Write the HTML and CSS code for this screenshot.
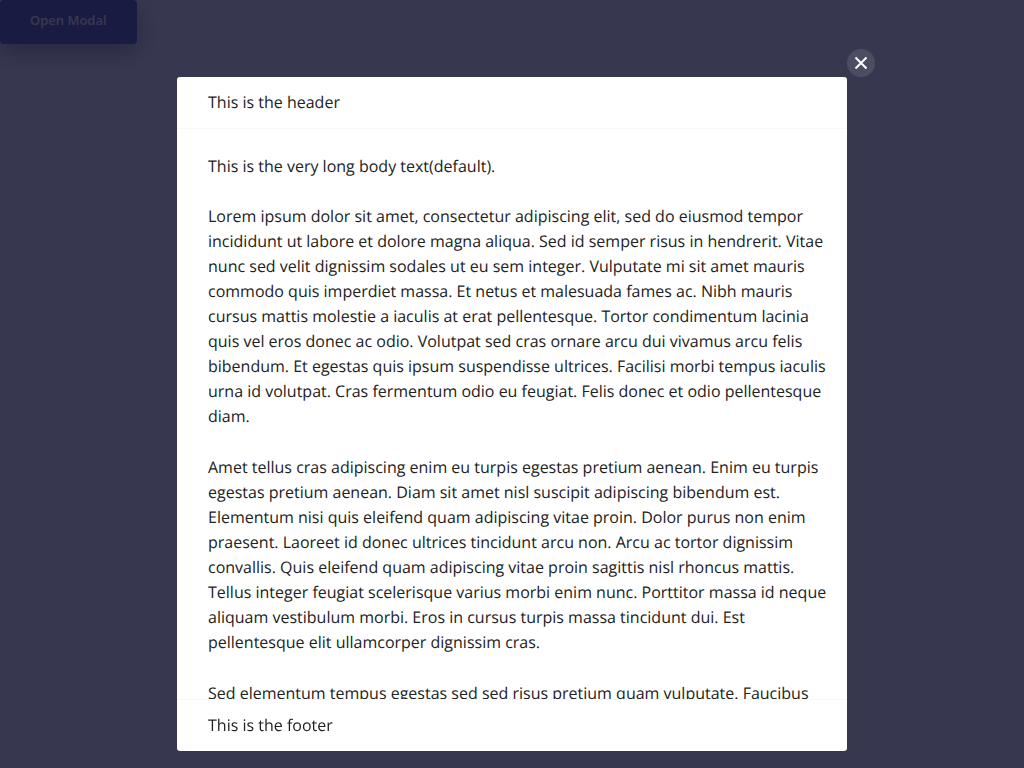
FILE: index.html
```html
<!DOCTYPE html>
<html lang="en">
<head>
<meta charset="utf-8">
<meta name="viewport" content="width=device-width, initial-scale=1">
<title>Modal</title>
<link rel="stylesheet" href="styles.css">
</head>
<body>
<button class="open-button" type="button">Open Modal</button>
<div class="overlay">
  <div class="modal" role="dialog" aria-modal="true" aria-labelledby="modal-title">
    <button class="close-button" type="button" aria-label="Close">
      <svg class="close-icon" viewBox="0 0 14 14" aria-hidden="true"><path d="M1.5 1.5l11 11M12.5 1.5l-11 11"/></svg>
    </button>
    <header class="modal-header" id="modal-title">This is the header</header>
    <div class="modal-body">
      <p class="intro">This is the very long body text(default).</p>
      <p>Lorem ipsum dolor sit amet, consectetur adipiscing elit, sed do eiusmod tempor<br>
      incididunt ut labore et dolore magna aliqua. Sed id semper risus in hendrerit. Vitae<br>
      nunc sed velit dignissim sodales ut eu sem integer. Vulputate mi sit amet mauris<br>
      commodo quis imperdiet massa. Et netus et malesuada fames ac. Nibh mauris<br>
      cursus mattis molestie a iaculis at erat pellentesque. Tortor condimentum lacinia<br>
      quis vel eros donec ac odio. Volutpat sed cras ornare arcu dui vivamus arcu felis<br>
      bibendum. Et egestas quis ipsum suspendisse ultrices. Facilisi morbi tempus iaculis<br>
      urna id volutpat. Cras fermentum odio eu feugiat. Felis donec et odio pellentesque<br>
      diam.</p>
      <p>Amet tellus cras adipiscing enim eu turpis egestas pretium aenean. Enim eu turpis<br>
      egestas pretium aenean. Diam sit amet nisl suscipit adipiscing bibendum est.<br>
      Elementum nisi quis eleifend quam adipiscing vitae proin. Dolor purus non enim<br>
      praesent. Laoreet id donec ultrices tincidunt arcu non. Arcu ac tortor dignissim<br>
      convallis. Quis eleifend quam adipiscing vitae proin sagittis nisl rhoncus mattis.<br>
      Tellus integer feugiat scelerisque varius morbi enim nunc. Porttitor massa id neque<br>
      aliquam vestibulum morbi. Eros in cursus turpis massa tincidunt dui. Est<br>
      pellentesque elit ullamcorper dignissim cras.</p>
      <p>Sed elementum tempus egestas sed sed risus pretium quam vulputate. Faucibus</p>
    </div>
    <footer class="modal-footer">This is the footer</footer>
  </div>
</div>
</body>
</html>
```
FILE: styles.css
```css
* {
  box-sizing: border-box;
}

body {
  margin: 0;
  min-height: 100vh;
  background: #fff;
  color: #222;
  font: 16px/25px "Open Sans", sans-serif;
  text-rendering: geometricPrecision;
}

.open-button {
  display: block;
  padding: 10px 30px 14px;
  border: 0;
  border-radius: 4px;
  background: #5454b2;
  box-shadow: 0 8px 24px rgba(0, 0, 0, 0.4);
  color: #fff;
  font: 600 13px/20px "Open Sans", sans-serif;
}

.overlay {
  position: fixed;
  inset: 0;
  display: flex;
  flex-direction: column;
  align-items: center;
  padding: 77px 16px 17px;
  background: rgba(15, 16, 43, 0.83);
}

.modal {
  position: relative;
  display: flex;
  flex-direction: column;
  width: 100%;
  max-width: 670px;
  min-height: 0;
  border-radius: 3px;
  background: #fff;
}

.modal-header,
.modal-footer {
  flex: none;
  padding: 13px 31px;
}

.modal-header {
  border-bottom: 1px solid #f8f8f8;
}

.modal-footer {
  border-top: 1px solid #f8f8f8;
}

.modal-body {
  flex: 1;
  min-height: 0;
  padding: 25px 12px 25px 31px;
  overflow: hidden;
}

.modal-body p {
  margin: 0 0 26px;
}

.modal-body .intro {
  margin-bottom: 25px;
}

.close-button {
  position: absolute;
  top: -28px;
  right: -28px;
  display: grid;
  place-items: center;
  width: 28px;
  height: 28px;
  padding: 0;
  border: 0;
  border-radius: 50%;
  background: #4c4d61;
}

.close-icon {
  width: 14px;
  height: 14px;
  fill: none;
  stroke: #fff;
  stroke-width: 2;
}
```
